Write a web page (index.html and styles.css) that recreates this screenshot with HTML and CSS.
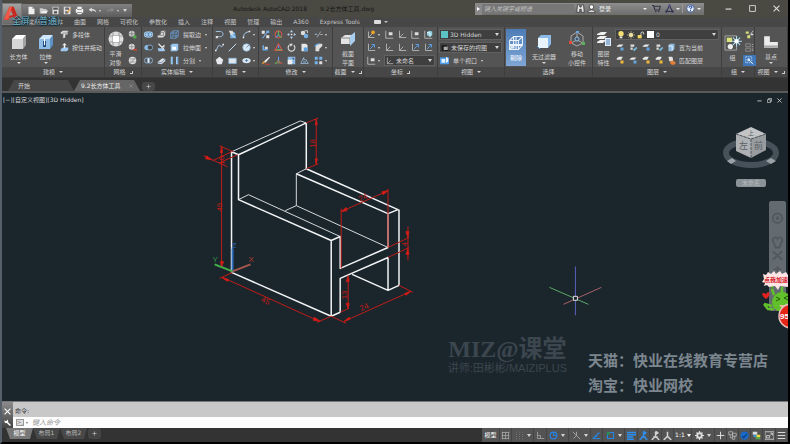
FILE: index.html
```html
<!DOCTYPE html>
<html lang="zh-CN">
<head>
<meta charset="utf-8">
<title>Autodesk AutoCAD 2018 - 9.2长方体工具.dwg</title>
<link rel="stylesheet" href="styles.css">
</head>
<body>
<svg class="sprite" aria-hidden="true">
  <symbol id="new" viewBox="0 0 12 12"><path d="M2 1h5l3 3v7H2z" fill="#eee"/><path d="M7 1v3h3" fill="#aaa"/></symbol>
  <symbol id="open" viewBox="0 0 12 12"><path d="M1 3h4l1 1h4v2H4l-2 4H1z" fill="#ccc"/><path d="M4 6h8l-2 4H2z" fill="#eee"/></symbol>
  <symbol id="save" viewBox="0 0 12 12"><path d="M2 1h8v10H2z" fill="#ddd"/><path d="M3 2h6v3H3zM4 7h4v3H4z" fill="#555"/></symbol>
  <symbol id="saveas" viewBox="0 0 12 12"><path d="M1 1h9v10H1z" fill="#ddd"/><path d="M3 2h5v3H3zM3 7h4v3H3z" fill="#666"/><path d="M5 8l5-5 1 1-5 5z" fill="#e59a3c"/></symbol>
  <symbol id="print" viewBox="0 0 12 12"><path d="M3 1h6v3H3zM1 4h10v5H1zM3 8h6v3H3z" fill="#eee"/><path d="M3 4h6v1H3zM3 8h6v1H3z" fill="#777"/></symbol>
  <symbol id="undo" viewBox="0 0 12 12"><path d="M1 5l4-3v2c4 0 6 2 6 5-1-2-3-3-6-3v2z" fill="#ddd"/></symbol>
  <symbol id="redo" viewBox="0 0 12 12"><path d="M11 5L7 2v2C3 4 1 6 1 9c1-2 3-3 6-3v2z" fill="#888"/></symbol>
  <symbol id="bino" viewBox="0 0 12 12"><path d="M2 1h3v3h2V1h3l1 10H7V7H5v4H1z" fill="#e4e4e4" stroke="#333"/></symbol>
  <symbol id="user" viewBox="0 0 12 12"><circle cx="6" cy="4" r="3" fill="#fff" stroke="#333"/><path d="M1 11c1-4 9-4 10 0z" fill="#fff" stroke="#333"/></symbol>
  <symbol id="cart" viewBox="0 0 12 12"><path d="M0 2h2l2 6h6l1-5H3" fill="none" stroke="#334" stroke-width="1.5"/><circle cx="5" cy="10" r="1" fill="#334"/><circle cx="9" cy="10" r="1" fill="#334"/></symbol>
  <symbol id="a360" viewBox="0 0 12 12"><path d="M6 2l4 8H2z" fill="none" stroke="#335" stroke-width="1.4"/><circle cx="6" cy="2" r="1.6" fill="#558"/><circle cx="2" cy="10" r="1.6" fill="#335"/><circle cx="10" cy="10" r="1.6" fill="#335"/></symbol>
  <symbol id="help" viewBox="0 0 12 12"><circle cx="6" cy="6" r="5" fill="#e8eefc" stroke="#35508c"/><path d="M4 5c0-3 4-3 4-1 0 1-2 1-2 3M6 8v2" stroke="#2a4fa4" stroke-width="1.4" fill="none"/></symbol>
  <symbol id="box" viewBox="0 0 16 16"><path d="M1 5l4-4h10l-3 4z" fill="#fff"/><path d="M1 5h11v10H1z" fill="#d6d6d6"/><path d="M12 5l3-4v10l-3 4z" fill="#a2a2a2"/></symbol>
  <symbol id="extrude" viewBox="0 0 16 16"><path d="M1 5l4-4h10l-3 4z" fill="#cfe6fa"/><path d="M1 5h11v10H1z" fill="#8fbce4"/><path d="M12 5l3-4v10l-3 4z" fill="#5c92c4"/><path d="M5 7h3v6H5z" fill="#28527d"/><path d="M6.500 4v7" stroke="#fff"/></symbol>
  <symbol id="polysolid" viewBox="0 0 12 12"><path d="M1 3l3-2h7l-1 5H7v4l-3 1V5H1z" fill="#ddd"/><path d="M4 4h6l1-3M4 5v6" stroke="#777" fill="none"/></symbol>
  <symbol id="press" viewBox="0 0 12 12"><path d="M1 8l3-2h7v3l-2 2H1z" fill="#9cc7ee"/><path d="M5 7V3H3l3-3 3 3H7v4z" fill="#eee"/></symbol>
  <symbol id="globe" viewBox="0 0 16 16"><circle cx="8" cy="8" r="7.500" fill="#dedede"/><path d="M5 1v14M11 1v14M1 5h14M1 11h14" stroke="#999" fill="none"/><path d="M5 5h6v6H5z" fill="#fff"/></symbol>
  <symbol id="meshmore" viewBox="0 0 12 12"><circle cx="5" cy="5" r="4" fill="#ccc"/><path d="M1 5h8M5 1v8" stroke="#777"/><circle cx="9" cy="9" r="2.500" fill="#54a64e"/></symbol>
  <symbol id="meshless" viewBox="0 0 12 12"><circle cx="5" cy="5" r="4" fill="#ddd"/><path d="M1 5h8M5 1v8" stroke="#888"/><path d="M7 8h5v2H7z" fill="#d8442e"/></symbol>
  <symbol id="refine" viewBox="0 0 12 12"><circle cx="6" cy="6" r="5" fill="#ddd"/><path d="M2 4h8M2 8h8M3 10l7-8" stroke="#888"/></symbol>
  <symbol id="union" viewBox="0 0 12 12"><rect y="2" width="12" height="8" rx="4" fill="#bcd9f3"/><circle cx="4" cy="6" r="2.500" fill="none" stroke="#3d77b2"/><circle cx="8" cy="6" r="2.500" fill="none" stroke="#3d77b2"/></symbol>
  <symbol id="subtract" viewBox="0 0 12 12"><circle cx="4" cy="6" r="3.500" fill="#8dbbe6"/><circle cx="8" cy="6" r="3.500" fill="#444" stroke="#8dbbe6"/></symbol>
  <symbol id="intersect" viewBox="0 0 12 12"><circle cx="4" cy="6" r="3.500" fill="none" stroke="#9cc3e8"/><circle cx="8" cy="6" r="3.500" fill="none" stroke="#9cc3e8"/><path d="M6 3v6" stroke="#d8ecff" stroke-width="2"/></symbol>
  <symbol id="solid" viewBox="0 0 12 12"><path d="M1 7l4-1V2l2-1h4v6L8 10H1z" fill="#ddd"/><path d="M5 3h4v4H1M9 3l2-2" stroke="#666" fill="none"/></symbol>
  <symbol id="slice" viewBox="0 0 12 12"><path d="M1 7h6l4 2-1 2H2z" fill="#9dc8ef"/><path d="M2 1l7 7" stroke="#eee" stroke-width="1.5"/><path d="M6 5l4-3v4z" fill="#ddd"/></symbol>
  <symbol id="thick" viewBox="0 0 12 12"><path d="M1 8l6-5 4 1v3l-5 4-5-1z" fill="#ddd"/><path d="M1 8l5 1 5-5" stroke="#4d86bd" fill="none"/></symbol>
  <symbol id="edges" viewBox="0 0 12 12"><path d="M1 4h7v7H1zM4 1h7v7H4zM1 4l3-3M8 4l3-3M8 11l3-3M1 11l3-3" fill="none" stroke="#69a3de"/></symbol>
  <symbol id="face" viewBox="0 0 12 12"><path d="M1 3l2-2h8v8l-2 2H1z" fill="#9cc7ef"/><path d="M3 5h5v4H3z" fill="#fff"/></symbol>
  <symbol id="split" viewBox="0 0 12 12"><path d="M1 1h3v10H1zM8 1h3v10H8z" fill="#a4ccef"/><path d="M3 2v8M10 2v8" stroke="#5a93c8"/></symbol>
  <symbol id="pline" viewBox="0 0 12 12"><path d="M1 2h6c5 0 5 7 0 7H4" fill="none" stroke="#9bc0e4" stroke-width="1.300"/><path d="M1 8h3v3H1z" fill="#ddd"/></symbol>
  <symbol id="hatch" viewBox="0 0 12 12"><path d="M3 3h6l2 8H3z" fill="#75aee4"/><path d="M1 1h5l2 4-4 2z" fill="#ddd"/><path d="M5 7l4 3" stroke="#e9f5ff"/></symbol>
  <symbol id="arc" viewBox="0 0 12 12"><path d="M2 10C2 5 5 3 10 2" fill="none" stroke="#a9cbed" stroke-width="1.300"/><path d="M1 9h2v2H1zM9 1h2v2H9z" fill="#eee"/></symbol>
  <symbol id="spline" viewBox="0 0 12 12"><path d="M1 10c2 0 2-7 5-7s1 6 5-1" fill="none" stroke="#a9cbed" stroke-width="1.300"/><path d="M0 9h2v2H0zM10 1h2v2h-2z" fill="#eee"/></symbol>
  <symbol id="line" viewBox="0 0 12 12"><path d="M1 11L11 1" stroke="#c8dcf0" stroke-width="1.300"/></symbol>
  <symbol id="circle" viewBox="0 0 12 12"><circle cx="6" cy="6" r="5" fill="#d9e7f4" stroke="#8cb5db"/><path d="M6 6l4-4" stroke="#56789b"/></symbol>
  <symbol id="poly" viewBox="0 0 12 12"><path d="M6 1l5 4-2 6H3L1 5z" fill="#e5e9ed"/></symbol>
  <symbol id="rect" viewBox="0 0 12 12"><path d="M1 3h10v7H1z" fill="#dfe7ef" stroke="#8cb5db"/></symbol>
  <symbol id="ellipse" viewBox="0 0 12 12"><ellipse cx="6" cy="6" rx="5.500" ry="3.500" fill="#d8e5f1"/><path d="M6 4v4M4 6h4" stroke="#4878a5"/></symbol>
  <symbol id="move3" viewBox="0 0 12 12"><path d="M1 1h4v4H1zM7 7h4v4H7z" fill="#e5e5e5"/><path d="M10 1L2 11" stroke="#75aee4" stroke-width="1.500"/><path d="M7 1h4v3H7z" fill="#75aee4"/></symbol>
  <symbol id="corner" viewBox="0 0 12 12"><path d="M3 3v6h6" fill="none" stroke="#6fa9e2" stroke-width="2"/><path d="M5 5h4v3H5z" fill="#ddd"/></symbol>
  <symbol id="brush" viewBox="0 0 12 12"><path d="M4 7l7-6 1 1-6 7z" fill="#eee"/><path d="M1 11l2-4 3 2z" fill="#ec9b31"/><path d="M6 11h5" stroke="#cf4030" stroke-width="1.500"/></symbol>
  <symbol id="gizmo" viewBox="0 0 12 12"><circle cx="6" cy="6" r="4.500" fill="none" stroke="#d6534a" stroke-width="1.400"/><path d="M6 1v6l4 3" stroke="#62b35d" fill="none" stroke-width="1.600"/><path d="M6 7l-4 3" stroke="#5b91dc" stroke-width="1.600"/></symbol>
  <symbol id="gizmo3" viewBox="0 0 12 12"><path d="M6 1l5 9H1z" fill="none" stroke="#d6534a" stroke-width="1.500"/><path d="M6 3v4" stroke="#5b91dc" stroke-width="1.600"/><path d="M3 9h7" stroke="#62b35d" stroke-width="1.600"/></symbol>
  <symbol id="gizmo2" viewBox="0 0 12 12"><path d="M6 1v7" stroke="#659ce2" stroke-width="1.500"/><path d="M6 8l5 2" stroke="#d6534a" stroke-width="1.500"/><path d="M6 8l-5 2" stroke="#62b35d" stroke-width="1.500"/><path d="M4 6h4v4H4z" fill="#8a7a5c"/></symbol>
  <symbol id="move" viewBox="0 0 12 12"><path d="M6 0l2 3H4zM6 12l2-3H4zM0 6l3-2v4zM12 6L9 4v4z" fill="#b9d8f6"/><path d="M5 5h2v2H5z" fill="#eee"/></symbol>
  <symbol id="rotate" viewBox="0 0 12 12"><path d="M3 3a4.500 4.500 0 1 0 6 0" fill="none" stroke="#ddd" stroke-width="1.500"/><path d="M3 1h5L5 5z" fill="#e4e4e4"/></symbol>
  <symbol id="scale" viewBox="0 0 12 12"><path d="M1 1h10v10H1z" fill="#8dbbe6"/><path d="M1 5h6v6H1z" fill="#eee"/><path d="M7 3h2v2" stroke="#335" fill="none"/></symbol>
  <symbol id="copy" viewBox="0 0 12 12"><circle cx="4" cy="4" r="3" fill="#ddd"/><circle cx="8" cy="8" r="3" fill="#78afe4"/><path d="M6 1h4v3" stroke="#eee" fill="none"/></symbol>
  <symbol id="page" viewBox="0 0 12 12"><path d="M2 1h6l2 2v8H2z" fill="#e7e7e7"/><path d="M5 6h5v5H5z" fill="#5ba0df"/></symbol>
  <symbol id="mirror" viewBox="0 0 12 12"><path d="M1 10l4-8v3h3l3 5z" fill="none" stroke="#9cc4ea"/><path d="M4 8h4" stroke="#9cc4ea"/></symbol>
  <symbol id="trim" viewBox="0 0 12 12"><path d="M1 6h3M8 6h4M4 10L9 2" stroke="#a6a6a6" stroke-width="1.200"/><path d="M2 4l4 4" stroke="#6298cc"/></symbol>
  <symbol id="fillet" viewBox="0 0 12 12"><path d="M2 11V6c0-3 2-5 5-5h4v3L7 8v3z" fill="#ddd"/><path d="M1 5c1-3 3-4 6-4" stroke="#60a0dc" fill="none" stroke-width="1.500"/></symbol>
  <symbol id="array" viewBox="0 0 12 12"><path d="M1 1h4v4H1zM7 1h4v4H7zM1 7h4v4H1z" fill="#76b2ea"/><path d="M7 7h4v4H7z" fill="#ddd"/></symbol>
  <symbol id="section" viewBox="0 0 16 14"><path d="M1 6l4-3h9v6l-4 3H1z" fill="#e4e4e4"/><path d="M1 6h9v6" stroke="#888" fill="none"/><path d="M10 4l5-4v9l-5 5z" fill="#a9cdef"/></symbol>
  <symbol id="ucs" viewBox="0 0 12 12"><path d="M2 1v9h9M2 10l5-5" fill="none" stroke="#c9c9c9"/></symbol>
  <symbol id="ucsy" viewBox="0 0 12 12"><path d="M2 2v8h8M2 10l5-5" fill="none" stroke="#c9c9c9"/><circle cx="8" cy="3" r="2.500" fill="#f0a32a"/></symbol>
  <symbol id="ucsb" viewBox="0 0 12 12"><path d="M2 1v9h9" fill="none" stroke="#c9c9c9"/><path d="M4 8l5-5M6 2h4v4" fill="none" stroke="#5ca0e5" stroke-width="1.300"/></symbol>
  <symbol id="ucsw" viewBox="0 0 12 12"><path d="M1 1v10h10" fill="none" stroke="#c9c9c9"/><path d="M5 3h5v4H5z" fill="#ddd"/></symbol>
  <symbol id="ucscube" viewBox="0 0 12 12"><path d="M1 1v10h10" fill="none" stroke="#c9c9c9"/><path d="M4 3l3-2 4 1v5L8 9 4 7z" fill="#8ed1e4"/><path d="M4 3l4 1v5" stroke="#fff" fill="none"/></symbol>
  <symbol id="camera" viewBox="0 0 12 12"><path d="M1 2h8v3H6v3h5v2H1z" fill="#171717"/><path d="M4 4h6v5H4z" fill="#aaa"/></symbol>
  <symbol id="viewport" viewBox="0 0 12 12"><path d="M0 2h12v9H0z" fill="#4c9eeb"/><path d="M2 4h5v5H2zM8 1l3 2v5L8 9z" fill="#e6f2ff"/></symbol>
  <symbol id="cull" viewBox="0 0 20 20"><path d="M2 7l5-5h11v11l-5 5H2zM2 7h11v11M13 7l5-5M7 2v11H2M7 13h11M7 13l-5 5M2 12h16M10 2v16" fill="none" stroke="#edf4fb" stroke-width="1.300"/><path d="M3 13h5v4H3z" fill="#dbe8f5"/></symbol>
  <symbol id="filter" viewBox="0 0 16 16"><path d="M2 4l3-3h10v9l-3 4H2z" fill="#8abbe8"/><path d="M2 4h10v10H2z" fill="#e9f3fc"/><path d="M1 12l3 3" stroke="#4ca0e0"/></symbol>
  <symbol id="subgizmo" viewBox="0 0 16 16"><path d="M8 1l6 4v7l-6 3-6-3V5zM8 1v6M8 9l-6 3M8 9l6 3" fill="none" stroke="#aaa"/><circle cx="8" cy="8" r="2" fill="#405368" stroke="#94bfe8"/><path d="M0 10h3v3H0z" fill="#df4b38"/><path d="M13 11h3v3h-3z" fill="#59b259"/><path d="M7 0h3v2H7z" fill="#68a4e4"/></symbol>
  <symbol id="layers" viewBox="0 0 16 16"><path d="M1 3l4-2h6L8 4H1zM1 7l3-2h7L8 8H1zM1 11l3-2h6l-3 3H1z" fill="#f0f0f0"/><path d="M9 7h6v8H9z" fill="#e2edf8"/><path d="M10 9h4M10 11h4M10 13h4" stroke="#477cb4"/></symbol>
  <symbol id="bulb" viewBox="0 0 12 12"><circle cx="6" cy="4" r="4" fill="#f5df72"/><path d="M4 8h4v3H4z" fill="#ddd"/></symbol>
  <symbol id="sun" viewBox="0 0 12 12"><circle cx="6" cy="6" r="3" fill="#fff3b2"/><path d="M6 0v12M0 6h12M2 2l8 8M10 2l-8 8" stroke="#e8dda0" stroke-width=".8"/></symbol>
  <symbol id="lock" viewBox="0 0 12 12"><path d="M1 6h6v5H1z" fill="#f1d563"/><path d="M6 6V3c0-2 4-2 4 0v2" stroke="#e4e4e4" fill="none" stroke-width="1.300"/></symbol>
  <symbol id="layer" viewBox="0 0 12 12"><path d="M1 4l3-2h6L7 5H1z" fill="#e8e8e8"/><path d="M6 6h4v4H6z" fill="#62a5de"/></symbol>
  <symbol id="layer2" viewBox="0 0 12 12"><path d="M2 2h5v3H2zM2 6h3v3H2z" fill="#ddd"/><path d="M5 9l5-4 1 2-4 4z" fill="#75b8d8"/></symbol>
  <symbol id="layery" viewBox="0 0 12 12"><path d="M1 3l3-2h5L7 5H1z" fill="#e8e8e8"/><path d="M6 6h4v4H6z" fill="#f0b73a"/></symbol>
  <symbol id="layerc" viewBox="0 0 12 12"><path d="M2 3l2-2h6v7l-3 3H2z" fill="#8fbbe2"/><path d="M2 4h5v6" stroke="#fff" fill="none"/></symbol>
  <symbol id="layero" viewBox="0 0 12 12"><path d="M2 1h5l1 3v3H3z" fill="#e2e2e2"/><path d="M4 7l4-1 4 3-3 3-4-1z" fill="#e3813a"/></symbol>
  <symbol id="group" viewBox="0 0 20 18"><path d="M1 1h13v16H1z" fill="none" stroke="#aaa"/><path d="M3 3h6v5H3z" fill="#dce37b"/><circle cx="7" cy="13" r="3" fill="#eee"/><path d="M14 1v12M8 7h12M10 3l8 8M18 3l-8 8" stroke="#a9e4fb" stroke-width="1.200"/><circle cx="14" cy="7" r="2.500" fill="#fff"/></symbol>
  <symbol id="ungroup" viewBox="0 0 12 12"><path d="M1 2h4v3H1zM3 7h4v4H3z" fill="#d7dd79"/><path d="M6 7l5-6" stroke="#ddd"/><path d="M8 5h3v2H8z" fill="#ddd"/></symbol>
  <symbol id="gedit" viewBox="0 0 12 12"><path d="M1 1h6v4H1zM1 7h6v4H1z" fill="none" stroke="#999"/><path d="M9 2h2M9 5h2M9 8h2M9 10h2" stroke="#bbb"/></symbol>
  <symbol id="gsel" viewBox="0 0 12 12"><path d="M1 1h8v8H1z" fill="none" stroke="#cce4fb" stroke-dasharray="2 1"/><circle cx="5" cy="5" r="2" fill="#d9ecff"/><path d="M6 6l5 5" stroke="#fff"/></symbol>
  <symbol id="base" viewBox="0 0 14 12"><path d="M1 1h5v5h7v5H1z" fill="#ececec"/><path d="M1 10h12" stroke="#aaa" stroke-width="2"/></symbol>
  <symbol id="grid" viewBox="0 0 12 12"><path d="M1 2h10M1 6h10M1 10h10M2 1v10M6 1v10M10 1v10" stroke="#aaa"/></symbol>
  <symbol id="snap" viewBox="0 0 12 12"><path d="M2 1v10M6 1v10M10 1v10" stroke="#888" stroke-dasharray="1 2"/></symbol>
  <symbol id="ortho" viewBox="0 0 12 12"><path d="M2 1v9h9M2 6h4v4" fill="none" stroke="#aaa"/></symbol>
  <symbol id="polar" viewBox="0 0 12 12"><circle cx="6" cy="6" r="4.500" fill="none" stroke="#2385e8" stroke-width="1.500"/><path d="M6 2v4h4" stroke="#2385e8" stroke-width="1.500" fill="none"/></symbol>
  <symbol id="iso" viewBox="0 0 12 12"><path d="M1 1l10 10M6 1v5L2 10" stroke="#bbb" fill="none"/></symbol>
  <symbol id="track" viewBox="0 0 12 12"><path d="M1 10h10M1 10l9-8" stroke="#2385e8" stroke-width="1.500"/><path d="M5 6h2v2H5z" fill="#2385e8"/></symbol>
  <symbol id="osnap" viewBox="0 0 12 12"><path d="M2 2h8v8H2z" fill="none" stroke="#2385e8" stroke-width="1.500"/><path d="M1 1h4v4H1z" fill="#2c8d52"/></symbol>
  <symbol id="lwt" viewBox="0 0 12 12"><path d="M0 2h12M0 5h12M0 8h8M0 11h9" stroke="#2b90f4" stroke-width="2"/></symbol>
  <symbol id="anno" viewBox="0 0 12 12"><path d="M6 3v4L1 12M6 7l5 5M3 8h6M6 5l4-3" fill="none" stroke="currentColor" stroke-width="1.800"/><circle cx="7" cy="2" r="2" fill="currentColor"/></symbol>
  <symbol id="anno2" viewBox="0 0 12 12"><path d="M6 1v6l-5 5M6 7l5 5" fill="none" stroke="currentColor" stroke-width="2"/></symbol>
  <symbol id="gear" viewBox="0 0 12 12"><circle cx="6" cy="6" r="3" fill="none" stroke="#ddd" stroke-width="2.500"/><path d="M6 0v3M6 9v3M0 6h3M9 6h3M2 2l2 2M8 8l2 2M10 2L8 4M4 8l-2 2" stroke="#ddd" stroke-width="1.500"/></symbol>
  <symbol id="plus" viewBox="0 0 12 12"><path d="M6 1v10M1 6h10" stroke="#ddd" stroke-width="1.300"/></symbol>
  <symbol id="isolate" viewBox="0 0 12 12"><path d="M1 1h5v4H1zM6 3h5v4H6zM3 5v4h3M6 7h3v4H6z" fill="none" stroke="#bbb"/></symbol>
  <symbol id="perf" viewBox="0 0 12 12"><circle cx="6" cy="6" r="5.500" fill="#1869c9"/><path d="M3 7l2 2 4-5" stroke="#0b3976" stroke-width="1.500" fill="none"/></symbol>
  <symbol id="color" viewBox="0 0 12 12"><path d="M1 1h6v4H1z" fill="#ddd"/><path d="M2 5h4v3H2z" fill="#3b9bd8"/><path d="M6 5h5v3H6z" fill="#f0d83c"/><path d="M5 8h6v3H5z" fill="#58a84a"/></symbol>
  <symbol id="clean" viewBox="0 0 12 12"><path d="M0 1h12v10H0zM7 3h3v3M10 3L7 6M2 6h4v3H2z" fill="none" stroke="#ddd"/></symbol>
  <symbol id="menu" viewBox="0 0 12 12"><path d="M1 2h10M1 6h10M1 10h10" stroke="#ddd" stroke-width="1.300"/></symbol>
  <symbol id="min" viewBox="0 0 12 12"><path d="M1 7h10" stroke="currentColor" stroke-width="2"/></symbol>
  <symbol id="max" viewBox="0 0 12 12"><path d="M1 1h10v10H1z" fill="none" stroke="currentColor" stroke-width="1.500"/></symbol>
  <symbol id="restore" viewBox="0 0 12 12"><path d="M1 4h7v7H1zM4 4V1h7v7H8" fill="none" stroke="currentColor" stroke-width="1.600"/></symbol>
  <symbol id="close" viewBox="0 0 12 12"><path d="M1 1l10 10M11 1L1 11" stroke="currentColor" stroke-width="1.800"/></symbol>
  <symbol id="wrench" viewBox="0 0 12 12"><path d="M5 5l6 6" stroke="#fff" stroke-width="2.500"/><path d="M1 2l2 2 2-1V1c3 1 3 5 0 6S0 5 1 2" fill="#fff"/></symbol>
</svg>

<header class="titlebar">
  <div class="quick">
    <button aria-label="新建"><svg><use href="#new"/></svg></button>
    <button aria-label="打开"><svg><use href="#open"/></svg></button>
    <button aria-label="保存"><svg><use href="#save"/></svg></button>
    <button aria-label="另存为"><svg><use href="#saveas"/></svg></button>
    <button aria-label="打印"><svg><use href="#print"/></svg></button>
    <button class="split" aria-label="放弃"><svg><use href="#undo"/></svg><i class="dd"></i></button>
    <button class="split" aria-label="重做"><svg><use href="#redo"/></svg><i class="dd"></i></button>
    <button class="more" aria-label="自定义"><i class="dd"></i></button>
  </div>
  <h1><span>Autodesk AutoCAD 2018</span><span>9.2长方体工具.dwg</span></h1>
  <div class="search">
    <button class="expand" aria-label="展开"><i class="right"></i></button>
    <input type="text" aria-label="搜索" placeholder="键入关键字或短语">
    <button aria-label="查找"><svg><use href="#bino"/></svg></button>
    <button class="login"><svg><use href="#user"/></svg>登录<i class="dd"></i></button>
    <button aria-label="商店"><svg><use href="#cart"/></svg></button>
    <button class="split" aria-label="连接"><svg><use href="#a360"/></svg><i class="dd"></i></button>
    <button class="split help" aria-label="帮助"><svg><use href="#help"/></svg><i class="dd"></i></button>
  </div>
  <div class="window">
    <button aria-label="最小化"><svg><use href="#min"/></svg></button>
    <button aria-label="最大化"><svg><use href="#max"/></svg></button>
    <button aria-label="关闭"><svg><use href="#close"/></svg></button>
  </div>
</header>
<button class="app" aria-label="应用程序菜单">
  <svg viewBox="0 0 20 21"><path d="M1 16L7 2h5l5 13-4 1-1-3-5 1-1 3z" fill="#c9281d"/><path d="M7 2l3 0-1 4-3 10-5 0z" fill="#ee5a48"/><path d="M9 6l2 5-4 1z" fill="#9b9b9b"/><path d="M15 13h4l-2 2z" fill="#222"/></svg>
</button>
<div class="toast">全屏（普通）</div>

<nav class="menu">
  <a href="#">常用</a><a href="#">实体</a><a href="#">曲面</a><a href="#">网格</a><a href="#">可视化</a><a href="#">参数化</a><a href="#">插入</a><a href="#">注释</a><a href="#">视图</a><a href="#">管理</a><a href="#">输出</a><a href="#">A360</a><a href="#">Express Tools</a>
  <button aria-label="功能区显示"><span class="pill"></span><i class="dd"></i></button>
</nav>

<main class="ribbon">
  <section class="panel">
    <div class="body indent">
      <button class="big"><svg><use href="#box"/></svg>长方体<i class="dd"></i></button>
      <button class="big"><svg><use href="#extrude"/></svg>拉伸<i class="dd"></i></button>
      <div class="rows">
        <div class="row"><button class="text tight"><svg><use href="#polysolid"/></svg>多段体</button></div>
        <div class="row"><button class="text tight"><svg><use href="#press"/></svg>按住并拖动</button></div>
      </div>
    </div>
    <h2>建模<i class="dd"></i></h2>
  </section>
  <section class="panel">
    <div class="body">
      <button class="big narrow"><svg><use href="#globe"/></svg>平滑<br>对象</button>
      <div class="rows">
        <div class="row"><button aria-label="提高平滑度"><svg><use href="#meshmore"/></svg></button></div>
        <div class="row"><button aria-label="降低平滑度"><svg><use href="#meshless"/></svg></button></div>
        <div class="row"><button aria-label="优化网格"><svg><use href="#refine"/></svg></button></div>
      </div>
    </div>
    <h2>网格<i class="launch"></i></h2>
  </section>
  <section class="panel">
    <div class="body">
      <div class="rows">
        <div class="row"><button aria-label="并集"><svg><use href="#union"/></svg></button><button aria-label="干涉"><svg><use href="#solid"/></svg></button><button class="text"><svg><use href="#edges"/></svg>提取边<i class="dd"></i></button></div>
        <div class="row"><button aria-label="差集"><svg><use href="#subtract"/></svg></button><button aria-label="剖切"><svg><use href="#slice"/></svg></button><button class="text"><svg><use href="#face"/></svg>拉伸面<i class="dd"></i></button></div>
        <div class="row"><button aria-label="交集"><svg><use href="#intersect"/></svg></button><button aria-label="加厚"><svg><use href="#thick"/></svg></button><button class="text"><svg><use href="#split"/></svg>分割<i class="dd"></i></button></div>
      </div>
    </div>
    <h2>实体编辑<i class="dd"></i></h2>
  </section>
  <section class="panel">
    <div class="body">
      <div class="rows">
        <div class="row"><button aria-label="多段线"><svg><use href="#pline"/></svg></button><button aria-label="图案填充"><svg><use href="#hatch"/></svg></button><button class="split" aria-label="圆弧"><svg><use href="#arc"/></svg><i class="dd"></i></button></div>
        <div class="row"><button aria-label="样条曲线"><svg><use href="#spline"/></svg></button><button aria-label="直线"><svg><use href="#line"/></svg></button><button class="split" aria-label="圆"><svg><use href="#circle"/></svg><i class="dd"></i></button></div>
        <div class="row"><button aria-label="多边形"><svg><use href="#poly"/></svg></button><button aria-label="矩形"><svg><use href="#rect"/></svg></button><button class="split" aria-label="椭圆"><svg><use href="#ellipse"/></svg><i class="dd"></i></button></div>
      </div>
    </div>
    <h2>绘图<i class="dd"></i></h2>
  </section>
  <section class="panel">
    <div class="body">
      <div class="rows">
        <div class="row"><button aria-label="三维对齐"><svg><use href="#move3"/></svg></button><button aria-label="三维旋转"><svg><use href="#gizmo"/></svg></button><button aria-label="移动"><svg><use href="#move"/></svg></button><button aria-label="复制"><svg><use href="#copy"/></svg></button><button class="split" aria-label="修剪"><svg><use href="#trim"/></svg><i class="dd"></i></button></div>
        <div class="row"><button aria-label="偏移"><svg><use href="#corner"/></svg></button><button aria-label="三维缩放"><svg><use href="#gizmo3"/></svg></button><button aria-label="旋转"><svg><use href="#rotate"/></svg></button><button aria-label="拉伸"><svg><use href="#page"/></svg></button><button class="split" aria-label="圆角"><svg><use href="#fillet"/></svg><i class="dd"></i></button></div>
        <div class="row"><button aria-label="删除"><svg><use href="#brush"/></svg></button><button aria-label="三维移动"><svg><use href="#gizmo2"/></svg></button><button aria-label="缩放"><svg><use href="#scale"/></svg></button><button aria-label="镜像"><svg><use href="#mirror"/></svg></button><button class="split" aria-label="阵列"><svg><use href="#array"/></svg><i class="dd"></i></button></div>
      </div>
    </div>
    <h2>修改<i class="dd"></i></h2>
  </section>
  <section class="panel">
    <div class="body">
      <button class="big fill"><svg><use href="#section"/></svg>截面<br>平面</button>
    </div>
    <h2>截面<i class="dd"></i><i class="launch"></i></h2>
  </section>
  <section class="panel">
    <div class="body">
      <div class="rows">
        <div class="row"><button class="split" aria-label="三点"><svg><use href="#ucsy"/></svg><i class="dd"></i></button><button aria-label="世界"><svg><use href="#ucsw"/></svg></button><button aria-label="原点"><svg><use href="#ucs"/></svg></button><button aria-label="视图坐标"><svg><use href="#ucsw"/></svg></button><button aria-label="对象坐标"><svg><use href="#ucscube"/></svg></button></div>
        <div class="row"><button class="split" aria-label="绕轴旋转"><svg><use href="#ucsb"/></svg><i class="dd"></i></button><button aria-label="上一个"><svg><use href="#ucs"/></svg></button><button aria-label="坐标图标"><svg><use href="#ucs"/></svg></button><button aria-label="Z 轴"><svg><use href="#ucsb"/></svg></button><button aria-label="Y 轴"><svg><use href="#ucsb"/></svg></button></div>
        <div class="row"><button class="split" aria-label="显示坐标"><svg><use href="#ucsw"/></svg><i class="dd"></i></button><div class="combo"><svg><use href="#ucs"/></svg><select aria-label="命名坐标系"><option>未命名</option></select><i class="dd"></i></div></div>
      </div>
    </div>
    <h2>坐标<i class="launch"></i></h2>
  </section>
  <section class="panel">
    <div class="body">
      <div class="rows">
        <div class="row"><div class="combo"><span class="swatch cyan"></span><select aria-label="视觉样式"><option>3D Hidden</option></select><i class="dd"></i></div></div>
        <div class="row"><div class="combo"><svg><use href="#camera"/></svg><select aria-label="三维导航"><option>未保存的视图</option></select><i class="dd"></i></div></div>
        <div class="row"><button class="text"><svg><use href="#viewport"/></svg>单个视口<i class="dd"></i></button></div>
      </div>
    </div>
    <h2>视图<i class="dd"></i></h2>
  </section>
  <section class="panel">
    <div class="body">
      <button class="big on"><svg><use href="#cull"/></svg>剔除</button>
      <button class="big wide"><svg><use href="#filter"/></svg>无过滤器<i class="dd"></i></button>
      <button class="big fill"><svg><use href="#subgizmo"/></svg>移动<br>小控件</button>
    </div>
    <h2>选择</h2>
  </section>
  <section class="panel">
    <div class="body">
      <button class="big narrow"><svg><use href="#layers"/></svg>图层<br>特性</button>
      <div class="rows">
        <div class="row"><div class="combo"><svg><use href="#bulb"/></svg><svg><use href="#sun"/></svg><svg><use href="#lock"/></svg><span class="swatch"></span><select aria-label="图层"><option>0</option></select><i class="dd"></i></div></div>
        <div class="row"><button aria-label="关闭图层"><svg><use href="#layer"/></svg></button><button aria-label="隔离"><svg><use href="#layer2"/></svg></button><button aria-label="冻结"><svg><use href="#layer"/></svg></button><button aria-label="锁定"><svg><use href="#layer2"/></svg></button><button class="text tight"><svg><use href="#layerc"/></svg>置为当前</button></div>
        <div class="row"><button aria-label="打开图层"><svg><use href="#layery"/></svg></button><button aria-label="取消隔离"><svg><use href="#layer"/></svg></button><button aria-label="解冻"><svg><use href="#layery"/></svg></button><button aria-label="解锁"><svg><use href="#layery"/></svg></button><button class="text tight"><svg><use href="#layero"/></svg>匹配图层</button></div>
      </div>
    </div>
    <h2>图层<i class="dd"></i></h2>
  </section>
  <section class="panel">
    <div class="body">
      <button class="big narrow"><svg class="xl"><use href="#group"/></svg>组</button>
      <div class="rows">
        <div class="row"><button aria-label="解除编组"><svg><use href="#ungroup"/></svg></button></div>
        <div class="row"><button aria-label="编辑组"><svg><use href="#gedit"/></svg></button></div>
        <div class="row"><button class="sel" aria-label="选择组"><svg><use href="#gsel"/></svg></button></div>
      </div>
    </div>
    <h2>组<i class="dd"></i></h2>
  </section>
  <section class="panel">
    <div class="body">
      <button class="big fill"><svg><use href="#base"/></svg>基点<i class="dd"></i></button>
    </div>
    <h2>视图<i class="dd"></i><i class="launch"></i></h2>
  </section>
</main>

<nav class="files">
  <a href="#" class="file">开始</a>
  <a href="#" class="file active">9.2长方体工具<svg><use href="#close"/></svg></a>
  <button class="add" aria-label="新图形"><svg><use href="#plus"/></svg></button>
</nav>

<section class="canvas">
  <div class="viewlabel"><span>[−][自定义视图][3D Hidden]</span>
    <span class="docbtns"><button aria-label="最小化视口"><svg><use href="#min"/></svg></button><button aria-label="还原视口"><svg><use href="#restore"/></svg></button><button aria-label="关闭视口"><svg><use href="#close"/></svg></button></span>
  </div>
  <svg class="drawing" viewBox="2 92 786 309" role="img" aria-label="三维模型">
    <g class="thin">
      <path d="M296 173V205L285 210M296 205L388 247M231 151L300 120L306 122M238 199L248 194L340 236M296 173L306 168"/>
    </g>
    <g class="solid">
      <path d="M306 122L238 154L231 151V272L331 316V240L238 199V154M306 122V168L398 209L388 213L296 173M331 240L340 236V268L388 247V213M331 316L340 312V278L388 257V290L352 274M388 290L399 285V209"/>
    </g>
    <g class="dim">
      <path d="M316 118V163M306 122L318 117M306 168L318 163M221 146V266M233 151L219 145M203 155L227 166M231 151L212 160M237 154L221 161M222 277L319 321M232 272L219 278M331 316L317 322M344 321L411 291M331 316L346 323M399 285L413 292M341 211L388 190M341 208V268M388 188V247M408 226V260M388 247L409 237M388 257L409 247M348 275V308M340 312L349 308"/>
      <path class="tip" d="M316 118l1 6h-2zM316 164l1-6h-2zM221 145l1 7h-2zM221 267l2-6h-3zM211 159l-6-1 1-3zM221 277l7 2-1 2zM320 321l-7-1 1-3zM344 321l5-4 1 2zM411 291l-5 4-1-2zM341 211l5-4 1 3zM388 190l-6 1 1 3zM408 237l1-6h-3zM408 248l1 6h-3zM348 276l1 5h-3zM348 308l1-5h-3z"/>
    </g>
    <g class="dimtext">
      <text transform="translate(315 147) rotate(-90)">18</text>
      <text transform="translate(221 211) rotate(-90)">49</text>
      <text transform="translate(223 164) rotate(-90)">10</text>
      <text transform="translate(260 301) rotate(24)">45</text>
      <text transform="translate(361 311) rotate(-24)">24</text>
      <text transform="translate(360 201) rotate(-24)">24</text>
      <text transform="translate(407 246) rotate(-90)">4</text>
      <text transform="translate(347 299) rotate(-90)">13</text>
    </g>
    <g class="axes">
      <path d="M232 271V248" stroke="#2f6fc0"/><path d="M232 271L250 264" stroke="#a8584c"/><path d="M232 271L214 264" stroke="#45b04a"/>
      <text x="231" y="248" fill="#2f6fc0">Z</text><text x="248" y="262" fill="#b23a30">X</text><text x="212" y="262" fill="#2e9440">Y</text>
    </g>
    <g class="cursor">
      <path d="M576 266V315" stroke="#5961c0"/><path d="M602 287L564 304" stroke="#a9616b"/><path d="M550 287L589 304" stroke="#5da869"/><path d="M574 296h4v4h-4z" stroke="#ddd" fill="#1b252c"/>
    </g>
  </svg>
  <div class="cube">
    <svg viewBox="0 0 60 54">
      <ellipse cx="30" cy="28" rx="25" ry="12" fill="none" stroke="#46515a" stroke-width="6"/>
      <path d="M6 36l5-3 4 3-5 3zM45 36l5-3 5 3-5 3z" fill="#9ba2a7"/>
      <path d="M30 2l15 7-15 5-15-5z" fill="#c1c3c5"/><path d="M15 9l15 5v19l-15-7z" fill="#aeb1b3"/><path d="M45 9l-15 5v19l15-8z" fill="#989c9f"/>
      <path d="M15 9l15 5 15-5M30 14v19" fill="none" stroke="#4e565c" stroke-dasharray="3 1"/>
      <text x="27" y="10" class="tiny">上</text><text x="18" y="24" class="face">左</text><text x="33" y="24" class="face">前</text>
    </svg>
    <span>未命名</span>
  </div>
  <div class="navbar">
    <svg viewBox="0 0 18 108"><g fill="none" stroke="#50595f" stroke-width="2"><circle cx="9" cy="15" r="5"/><circle cx="9" cy="15" r="1"/><path d="M5 41c-3-4 2-8 4-4 2-4 7 0 4 4l-2 5H7zM4 50l10 9M14 50l-10 9M9 66v6M5 69h8"/></g></svg>
  </div>
  <div class="credit"><strong>MIZ@课堂</strong><em>讲师:田彬彬/MAIZIPLUS</em></div>
  <div class="shop"><p>天猫：快业在线教育专营店</p><p>淘宝：快业网校</p></div>
</section>

<section class="command">
  <div class="handle"><button aria-label="关闭命令行"><svg><use href="#close"/></svg></button><button aria-label="命令行设置"><svg><use href="#wrench"/></svg></button></div>
  <div class="console">
    <div class="history">命令:</div>
    <div class="prompt"><span class="chip">&gt;_</span><i class="dd"></i><input type="text" aria-label="命令" placeholder="键入命令"></div>
  </div>
</section>

<footer class="status">
  <nav class="layouts"><a href="#" class="active">模型</a><a href="#">布局1</a><a href="#">布局2</a><button aria-label="新建布局"><svg><use href="#plus"/></svg></button></nav>
  <div class="tools">
    <button class="label">模型</button>
    <button aria-label="栅格"><svg><use href="#grid"/></svg></button>
    <button class="split" aria-label="捕捉"><svg><use href="#snap"/></svg><i class="dd"></i></button>
    <button aria-label="正交"><svg><use href="#ortho"/></svg></button>
    <button class="split" aria-label="极轴追踪"><svg><use href="#polar"/></svg><i class="dd"></i></button>
    <button class="split" aria-label="等轴测草图"><svg><use href="#iso"/></svg><i class="dd"></i></button>
    <button aria-label="对象捕捉追踪"><svg><use href="#track"/></svg></button>
    <button class="split" aria-label="对象捕捉"><svg><use href="#osnap"/></svg><i class="dd"></i></button>
    <button aria-label="线宽"><svg><use href="#lwt"/></svg></button>
    <button class="blue" aria-label="注释可见性"><svg><use href="#anno"/></svg></button>
    <button aria-label="自动缩放"><svg><use href="#anno"/></svg></button>
    <button aria-label="注释比例"><svg><use href="#anno2"/></svg></button>
    <button class="label">1:1<i class="dd"></i></button>
    <button class="split" aria-label="切换工作空间"><svg><use href="#gear"/></svg><i class="dd"></i></button>
    <button aria-label="注释监视器"><svg><use href="#plus"/></svg></button>
    <button aria-label="隔离对象"><svg><use href="#isolate"/></svg></button>
    <button aria-label="硬件加速"><svg><use href="#perf"/></svg></button>
    <button aria-label="颜色"><svg><use href="#color"/></svg></button>
    <button aria-label="全屏显示"><svg><use href="#clean"/></svg></button>
    <button aria-label="自定义状态栏"><svg><use href="#menu"/></svg></button>
  </div>
</footer>

<aside class="booster">
  <svg viewBox="0 0 28 62">
    <ellipse cx="20" cy="31" rx="10" ry="10" fill="#62c12b"/>
    <path d="M12 24l-2-6M20 22v-6M10 35l-8-2M2 33l4 5 6 0" stroke="#62c12b" stroke-width="2.500" fill="none"/>
    <circle cx="10" cy="16" r="1.500" fill="#4aa520"/><circle cx="20" cy="14" r="1.500" fill="#4aa520"/>
    <path d="M14 26l4 2-4 2M26 25l-4 2 4 2" stroke="#24550d" fill="none"/><path d="M17 34h5l-2 3z" fill="#f2b9a0"/>
    <path d="M4 28c-4-3-5-6-2-6l2 1 2-2c3 1 1 5-2 7z" fill="#e32020"/>
    <path d="M1 3l3 1 2-3 3 2 3-3 2 3 4-3 2 3 4-2 2 3 3-1v10l-3 3-8-1-2 4-3-4-6 1-2-2-3 1 1-3-3-1 2-3z" fill="#fde5e5"/>
    <circle cx="29" cy="45" r="12" fill="#e52518" stroke="#e8c4c0" stroke-width="1.500"/>
    <text x="2" y="11" class="boost">点我加速</text><text x="18" y="48" class="score">95</text>
  </svg>
</aside>
</body>
</html>
```
FILE: styles.css
```css
* { box-sizing: border-box; }

body {
  margin: 0;
  height: 100vh;
  display: flex;
  flex-direction: column;
  overflow: hidden;
  position: relative;
  background: #333;
  border-left: 2px solid #56606a;
  border-right: 2px solid #000;
  border-bottom: 2px solid #000;
  color: #d6d6d6;
  font: 6px/8px "DejaVu Sans", "Noto Sans CJK SC", sans-serif;
}

h1, h2, p { margin: 0; font: inherit; }
a { color: inherit; text-decoration: none; }
.sprite { position: absolute; width: 0; height: 0; }

button, input, select {
  margin: 0;
  padding: 0;
  border: 0;
  background: none;
  color: inherit;
  font: inherit;
  appearance: none;
}

button {
  display: flex;
  align-items: center;
  justify-content: center;
  width: 13px;
  flex: none;
}

svg { width: 9px; height: 9px; flex: none; display: block; }

.dd {
  flex: none;
  border: 2px solid transparent;
  border-top-color: currentColor;
  border-bottom: 0;
}
.right {
  border: 2px solid transparent;
  border-left: 3px solid #fff;
  border-right: 0;
}
.launch { width: 3px; height: 3px; border: solid #ccc; border-width: 0 1px 1px 0; }
.split { width: 19px; gap: 2px; }

/* title bar */
.titlebar {
  flex: none;
  display: flex;
  align-items: center;
  height: 17px;
  padding-left: 20px;
  background: #4b4a42;
}
.quick {
  display: flex;
  align-self: flex-end;
  align-items: center;
  height: 13px;
  width: 110px;
  padding-left: 3px;
  background: linear-gradient(#808080, #5d5d5d);
}
.quick button { width: 12px; }
.quick .split { width: 18px; }
.quick .more { width: 8px; }
.quick .dd { border-width: 2px 1px 0; }
.quick .more .dd { border-width: 3px 2px 0; }
.titlebar h1 {
  flex: 1;
  display: flex;
  justify-content: center;
  gap: 13px;
  color: #161616;
}
.search {
  display: flex;
  align-items: center;
  width: 229px;
  height: 12px;
  background: linear-gradient(#8d8d8d, #6d6d6d);
  color: #eee;
}
.search input {
  width: 92px;
  height: 10px;
  padding-left: 2px;
  background: #777;
  font-style: italic;
}
.search input::placeholder { color: #c4c4c4; opacity: 1; }
.search .expand { width: 7px; align-self: stretch; background: #888; }
.search .login { flex: 1; justify-content: flex-start; gap: 3px; }
.search .login .dd { margin-left: auto; margin-right: 3px; }
.search .help { border-left: 1px solid #999; width: 22px; }
.window { display: flex; width: 84px; justify-content: space-around; color: #ddd; padding-left: 12px; }
.window svg { width: 7px; height: 7px; }

.app {
  position: absolute;
  left: 0;
  top: 3px;
  width: 20px;
  height: 22px;
  background: linear-gradient(#a3a3a3, #686868);
  border: 1px solid #777;
}
.app svg { width: 18px; height: 19px; }
.toast {
  position: absolute;
  left: 10px;
  top: 15px;
  z-index: 2;
  font-size: 9px;
  line-height: 13px;
  color: #7fb9cc;
  text-shadow: 0 0 1px #001c2a, 1px 0 0 #0c2a38, 0 1px 0 #0c2a38;
}

.menu {
  flex: none;
  display: flex;
  align-items: center;
  gap: 11px;
  height: 10px;
  padding-left: 26px;
  background: #474747;
  color: #c4c4c4;
}
.menu button { gap: 3px; width: 16px; margin-left: 2px; }
.pill { width: 7px; height: 4px; background: #ddd; border-radius: 1px; }

/* ribbon */
.ribbon {
  flex: none;
  display: grid;
  grid-template-columns: 103fr 37fr 71fr 46fr 74fr 31fr 74fr 67fr 88fr 129fr 33fr 33fr;
  background: #545454;
  border-bottom: 1px solid #3b3b3b;
}
.panel { min-width: 0; display: flex; flex-direction: column; border-right: 1px solid #3e3e3e; }
.body { display: flex; height: 40px; padding-top: 1px; }
.indent { padding-left: 3px; }
.panel h2 {
  display: flex;
  align-items: center;
  justify-content: center;
  gap: 4px;
  height: 10px;
  background: #474747;
}
.rows { flex: 1; min-width: 0; display: grid; grid-template-rows: repeat(3, 13px); }
.row { display: flex; align-items: center; min-width: 0; }
.row .dd { border-width: 2px 1px 0; }
.text { width: auto; padding-left: 2px; gap: 4px; }
.tight { padding-left: 1px; gap: 3px; }
.big {
  display: block;
  width: 27px;
  padding-top: 2px;
  line-height: 9px;
  text-align: center;
}
.big svg { width: 16px; height: 16px; margin: 0 auto 2px; }
.big svg.xl { width: 18px; }
.big .dd { display: block; width: 4px; margin: 1px auto 0; }
.narrow { width: 21px; }
.wide { width: 36px; }
.fill { width: auto; flex: 1; }
.on {
  width: 20px;
  height: 37px;
  margin: 1px 0 0 1px;
  padding-top: 1px;
  background: linear-gradient(#4e7cb5, #7da6d6);
  color: #fff;
}
.sel { background: #3f76b8; height: 11px; }
.combo {
  flex: 1;
  min-width: 0;
  display: flex;
  align-items: center;
  gap: 2px;
  height: 11px;
  margin: 0 2px 0 1px;
  padding: 0 2px 0 1px;
  background: #3f3f3f;
  border: 1px solid #616161;
}
.combo svg { width: 8px; height: 8px; }
.combo select { flex: 1; min-width: 0; height: 9px; }
.combo .dd { border-width: 3px 2px 0; }
.swatch { width: 7px; height: 7px; background: #fff; }
.cyan { background: #5cc4c4; }

/* drawing tabs */
.files {
  flex: none;
  display: flex;
  align-items: flex-end;
  height: 15px;
  padding-left: 6px;
  background: #333;
  border-bottom: 2px solid #5a5a5a;
}
.file {
  display: flex;
  align-items: center;
  justify-content: space-between;
  width: 66px;
  height: 11px;
  padding: 0 7px 0 10px;
  background: #474747;
  clip-path: polygon(6px 0, 60px 0, 100% 100%, 0 100%);
}
.file.active { background: #656565; color: #eee; padding-left: 7px; }
.file svg { width: 4px; height: 4px; color: #999; }
.add { height: 9px; margin-left: 2px; background: #484848; border-radius: 3px; }
.add svg { width: 5px; height: 5px; }

/* model space */
.canvas { flex: 1; min-height: 0; position: relative; background: #1b252c; }
.viewlabel {
  position: absolute;
  inset: 3px 4px auto 1px;
  display: flex;
  align-items: center;
  justify-content: space-between;
}
.docbtns { display: flex; color: #ddd; }
.docbtns button { width: 10px; }
.docbtns svg { width: 5px; height: 5px; }
.drawing { width: 100%; height: 100%; }
.thin path { fill: none; stroke: #d5dadd; stroke-width: 1; }
.solid path { fill: none; stroke: #f2f4f5; stroke-width: 1.5; stroke-linejoin: round; }
.dim path { fill: none; stroke: #c01d17; stroke-width: 1; }
.dim .tip { fill: #e11d15; }
.dimtext text { fill: #c01d17; font-size: 8px; font-family: "Liberation Sans", sans-serif; }
.axes path { stroke-width: 2; }
.axes text { font-size: 8px; font-family: "Liberation Sans", sans-serif; }
.cursor path { stroke-width: 1; }

.cube { position: absolute; right: 7px; top: 32px; width: 60px; }
.cube svg { width: 60px; height: 54px; }
.cube span {
  display: block;
  width: 30px;
  margin: 0 auto;
  background: #8c9398;
  border-radius: 2px;
  color: #b4babd;
  text-align: center;
}
.cube .tiny { font-size: 6px; fill: #596066; }
.cube .face { font-size: 9px; fill: #596066; }
.navbar {
  position: absolute;
  right: 2px;
  top: 108px;
  width: 17px;
  height: 110px;
  background: #646b70;
  border-radius: 2px;
}
.navbar svg { width: 17px; height: 108px; }
.credit {
  position: absolute;
  right: 221px;
  bottom: 26px;
  display: flex;
  flex-direction: column;
  align-items: center;
  color: #3b464e;
}
.credit strong { font: bold 24px/26px "Liberation Serif", "Noto Sans CJK SC", serif; }
.credit em { font: normal 11px/13px "Liberation Sans", "Noto Sans CJK SC", sans-serif; }
.shop {
  position: absolute;
  right: 20px;
  bottom: 4px;
  font: bold 15px/25px "Noto Sans CJK SC", sans-serif;
  color: #7b868e;
}

/* command line */
.command { flex: none; display: flex; height: 27px; border-top: 1px solid #777; }
.handle {
  width: 11px;
  display: flex;
  flex-direction: column;
  align-items: center;
  justify-content: space-around;
  padding-top: 4px;
  background: linear-gradient(#8b8b8b, #444);
  color: #fff;
}
.handle svg { width: 7px; height: 7px; }
.console { flex: 1; display: flex; flex-direction: column; color: #333; }
.history {
  height: 15px;
  padding: 5px 2px 0;
  background: #c8c8c8;
}
.prompt { flex: 1; display: flex; align-items: center; gap: 2px; padding-left: 3px; background: #fdfdfd; color: #777; }
.chip { width: 8px; height: 7px; border: 1px solid #999; font-size: 5px; line-height: 5px; background: #ddd; }
.prompt .dd { border-width: 2px 1px 0; }
.prompt input { flex: 1; margin-left: 2px; font-size: 7px; font-style: italic; }
.prompt input::placeholder { color: #999; opacity: 1; }

/* status bar */
.status { flex: none; display: flex; justify-content: space-between; height: 14px; background: #333; }
.layouts { display: flex; padding-left: 4px; height: 11px; line-height: 10px; color: #bbb; }
.layouts a {
  width: 27px;
  text-align: center;
  background: #484848;
  clip-path: polygon(0 0, 100% 0, 24px 100%, 4px 100%);
}
.layouts .active { background: #777; color: #fff; }
.layouts button { background: #444; border-radius: 3px; margin-left: 1px; }
.layouts svg { width: 5px; height: 5px; }
.tools {
  display: flex;
  justify-content: space-between;
  width: 306px;
  background: #545454;
}
.tools button { width: 12px; border-right: 1px solid #454545; }
.tools .split { width: 22px; gap: 3px; }
.tools .label { width: 18px; gap: 2px; color: #fff; }
.tools .dd { border-width: 3px 2px 0; }
.tools .blue { color: #2b90f4; }

/* floating helper */
.booster { position: absolute; right: -2px; top: 271px; }
.booster svg { width: 28px; height: 62px; }
.boost { font: bold 6px "Noto Sans CJK SC", sans-serif; fill: #d5192b; }
.score { font: bold 8px "Liberation Sans", sans-serif; fill: #fff; }
```
